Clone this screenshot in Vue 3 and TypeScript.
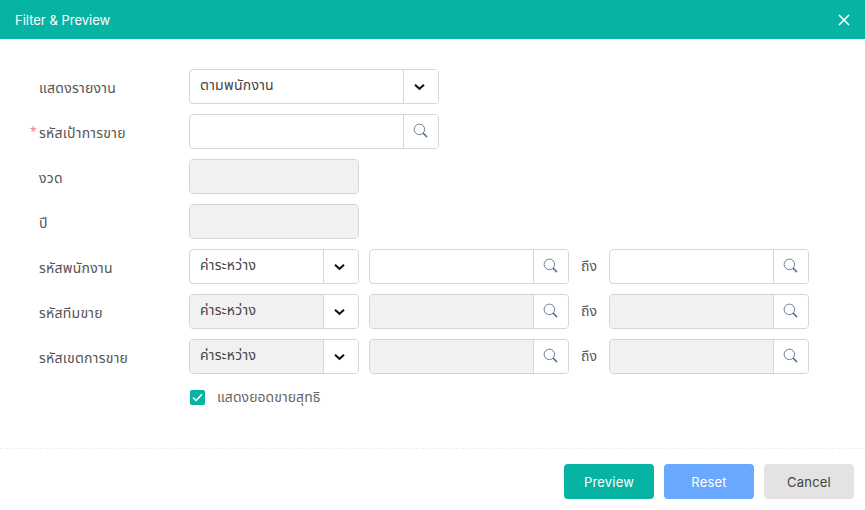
<script setup lang="ts">
interface RangeRow { label: string; disabled: boolean }
const rangeRows: RangeRow[] = [
  { label: 'รหัสพนักงาน', disabled: false },
  { label: 'รหัสทีมขาย', disabled: true },
  { label: 'รหัสเขตการขาย', disabled: true },
]
</script>

<template>
  <div class="dialog">
    <header class="head">
      <span class="title">Filter &amp; Preview</span>
      <svg class="close" width="12" height="12" viewBox="0 0 12 12" aria-label="close">
        <path d="M1 1 L11 11 M11 1 L1 11" stroke="#fff" stroke-width="1.6" fill="none" />
      </svg>
    </header>

    <main class="form">
      <div class="row">
        <label class="label">แสดงรายงาน</label>
        <div class="ctl w250">
          <div class="field"><span class="val">ตามพนักงาน</span></div>
          <div class="addon">
            <svg class="chev" width="11" height="8" viewBox="0 0 11 8"><path d="M1 1.8 L5.5 5.8 L10 1.8" stroke="#111" stroke-width="2" fill="none" /></svg>
          </div>
        </div>
      </div>

      <div class="row">
        <label class="label"><span class="req">*</span>รหัสเป้าการขาย</label>
        <div class="ctl w250">
          <div class="field"></div>
          <div class="addon">
            <svg class="lens" width="15" height="15" viewBox="0 0 16 16"><circle cx="6.8" cy="6.8" r="5.6" stroke="#5f7396" stroke-width="1" fill="none" /><path d="M10.8 10.8 L15 15" stroke="#5f7396" stroke-width="1.7" fill="none" /></svg>
          </div>
        </div>
      </div>

      <div class="row">
        <label class="label">งวด</label>
        <div class="ctl w170 off"><div class="field"></div></div>
      </div>

      <div class="row">
        <label class="label">ปี</label>
        <div class="ctl w170 off"><div class="field"></div></div>
      </div>

      <div v-for="r in rangeRows" :key="r.label" class="row">
        <label class="label">{{ r.label }}</label>
        <div class="ctl w170" :class="{ off: r.disabled }">
          <div class="field"><span class="val">ค่าระหว่าง</span></div>
          <div class="addon">
            <svg class="chev" width="11" height="8" viewBox="0 0 11 8"><path d="M1 1.8 L5.5 5.8 L10 1.8" stroke="#111" stroke-width="2" fill="none" /></svg>
          </div>
        </div>
        <div class="ctl w200" :class="{ off: r.disabled }">
          <div class="field"></div>
          <div class="addon">
            <svg class="lens" width="15" height="15" viewBox="0 0 16 16"><circle cx="6.8" cy="6.8" r="5.6" stroke="#5f7396" stroke-width="1" fill="none" /><path d="M10.8 10.8 L15 15" stroke="#5f7396" stroke-width="1.7" fill="none" /></svg>
          </div>
        </div>
        <span class="to">ถึง</span>
        <div class="ctl w200" :class="{ off: r.disabled }">
          <div class="field"></div>
          <div class="addon">
            <svg class="lens" width="15" height="15" viewBox="0 0 16 16"><circle cx="6.8" cy="6.8" r="5.6" stroke="#5f7396" stroke-width="1" fill="none" /><path d="M10.8 10.8 L15 15" stroke="#5f7396" stroke-width="1.7" fill="none" /></svg>
          </div>
        </div>
      </div>

      <div class="check-row">
        <span class="box">
          <svg width="11" height="9" viewBox="0 0 11 9"><path d="M1 4.5 L4 7.5 L10 1.2" stroke="#fff" stroke-width="1.6" fill="none" /></svg>
        </span>
        <span class="check-text">แสดงยอดขายสุทธิ</span>
      </div>
    </main>

    <footer class="foot">
      <button class="btn primary">Preview</button>
      <button class="btn blue">Reset</button>
      <button class="btn grey">Cancel</button>
    </footer>
  </div>
</template>

<style scoped>
.dialog {
  width: 865px;
  height: 510px;
  background: #fff;
  display: flex;
  flex-direction: column;
  overflow: hidden;
  font-family: "Noto Sans", "Noto Sans Thai", "Open Sans", sans-serif;
}
.head {
  height: 39px;
  flex: none;
  background: #07b3a2;
  display: flex;
  align-items: center;
  justify-content: space-between;
  padding: 0 15px;
  color: #fff;
}
.title {
  font-family: Inter, "Open Sans", sans-serif;
  font-size: 13px;
}
.form {
  padding: 30px 0 0 39px;
  display: flex;
  flex-direction: column;
  gap: 10px;
  flex: none;
  height: 410px;
  box-sizing: border-box;
  border-bottom: 1px dashed #efefef;
}
.row {
  display: flex;
  align-items: center;
  height: 35px;
  gap: 10px;
}
.label {
  width: 140px;
  position: relative;
  font-size: 14px;
  letter-spacing: 0.25px;
  color: #555;
  padding-top: 3px;
}
.req {
  position: absolute;
  left: -9px;
  top: 3px;
  font-size: 12px;
  color: #f77;
}
.ctl {
  display: flex;
  height: 35px;
  box-sizing: border-box;
  border: 1px solid #d6d6d6;
  border-radius: 4px;
  overflow: hidden;
  background: #fff;
}
.w250 { width: 250px; }
.w170 { width: 170px; }
.w200 { width: 200px; }
.field {
  flex: 1;
  display: flex;
  align-items: center;
  padding: 0 10px 2px;
  font-size: 14px;
  letter-spacing: 0.25px;
  color: #444;
  min-width: 0;
}
.off .field { background: #f1f1f1; }
.addon {
  width: 35px;
  flex: none;
  border-left: 1px solid #d6d6d6;
  background: #fff;
  display: flex;
  align-items: center;
  justify-content: center;
  box-sizing: border-box;
}
.chev { margin-right: 4px; }
.lens { margin: 0 1px 2px 0; }
.to {
  width: 20px;
  white-space: nowrap;
  text-align: center;
  font-size: 14px;
  color: #555;
}
.check-row {
  display: flex;
  align-items: center;
  height: 15px;
  margin-left: 151px;
  margin-top: 6px;
  gap: 12px;
}
.box {
  width: 15px;
  height: 15px;
  background: #07b3a2;
  border-radius: 2px;
  display: flex;
  align-items: center;
  justify-content: center;
}
.check-text {
  font-size: 14px;
  letter-spacing: 0.05px;
  color: #666;
}
.foot {
  display: flex;
  justify-content: flex-end;
  gap: 10px;
  padding: 15px 11px 0 0;
}
.btn {
  width: 90px;
  height: 35px;
  border: none;
  border-radius: 4px;
  font-family: Inter, "Open Sans", sans-serif;
  font-size: 13px;
  letter-spacing: 0.2px;
  padding: 0;
}
.primary { background: #07b3a2; color: #fff; }
.blue { background: #69a8ff; color: #fff; }
.grey { background: #e3e3e3; color: #444; }
</style>
